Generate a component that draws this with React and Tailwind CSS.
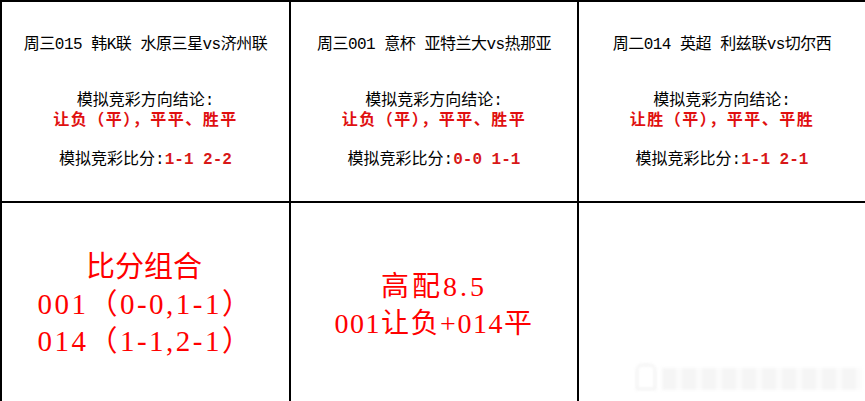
export default function App() {
  const matches = [
    { title: '周三015 韩K联 水原三星vs济州联', dir: '让负（平），平平、胜平', score: '1-1 2-2' },
    { title: '周三001 意杯 亚特兰大vs热那亚', dir: '让负（平），平平、胜平', score: '0-0 1-1' },
    { title: '周二014 英超 利兹联vs切尔西', dir: '让胜（平），平平、平胜', score: '1-1 2-1' },
  ];

  return (
    <div className="w-[865px] h-[401px] bg-white relative overflow-hidden">
      <div className="grid grid-cols-[289px_288px_288px] grid-rows-[201px_200px] w-[865px] border-l-2 border-t-2 border-black font-['Liberation_Mono','Noto_Sans_CJK_SC',sans-serif]">
        {matches.map((m, i) => (
          <div key={i} className="border-r-2 border-b-2 border-black flex flex-col items-center text-[16px] leading-[19px] text-black">
            <div className="mt-[34px] tracking-[-0.5px]">{m.title}</div>
            <div className="mt-[37px]">模拟竞彩方向结论:</div>
            <div className="mt-[1px] text-[#e01010] font-bold tracking-[1.5px]">{m.dir}</div>
            <div className="mt-[20px]">
              模拟竞彩比分:<span className="text-[#d81818] font-bold">{m.score}</span>
            </div>
          </div>
        ))}

        <div className="border-r-2 border-b-2 border-black flex flex-col items-center justify-center pt-[4px] text-[#ff0000] text-[29px] leading-[37px] tracking-[2.5px] font-['Liberation_Serif','Noto_Sans_CJK_SC',serif]">
          <div className="ml-[-3px] tracking-[0px]">比分组合</div>
          <div>001（0-0,1-1）</div>
          <div>014（1-1,2-1）</div>
        </div>
        <div className="border-r-2 border-b-2 border-black flex flex-col items-center justify-center pt-[6px] text-[#ff0000] text-[28px] leading-[37px] tracking-[1.5px] font-['Liberation_Serif','Noto_Sans_CJK_SC',serif]">
          <div className="tracking-[3px]">高配8.5</div>
          <div>001让负+014平</div>
        </div>
        <div className="border-r-2 border-b-2 border-black"></div>
      </div>

      {/* faint watermark */}
      <div className="absolute left-[636px] top-[364px] flex items-end gap-[6px] blur-[1.5px] opacity-50">
        <div className="w-[20px] h-[26px] border-2 border-[#e2e2e2] rounded-t-[6px]"></div>
        <div className="h-[22px] w-[200px] bg-[repeating-linear-gradient(90deg,#ececec_0px,#ececec_14px,#f8f8f8_14px,#f8f8f8_20px)]"></div>
      </div>
    </div>
  );
}
